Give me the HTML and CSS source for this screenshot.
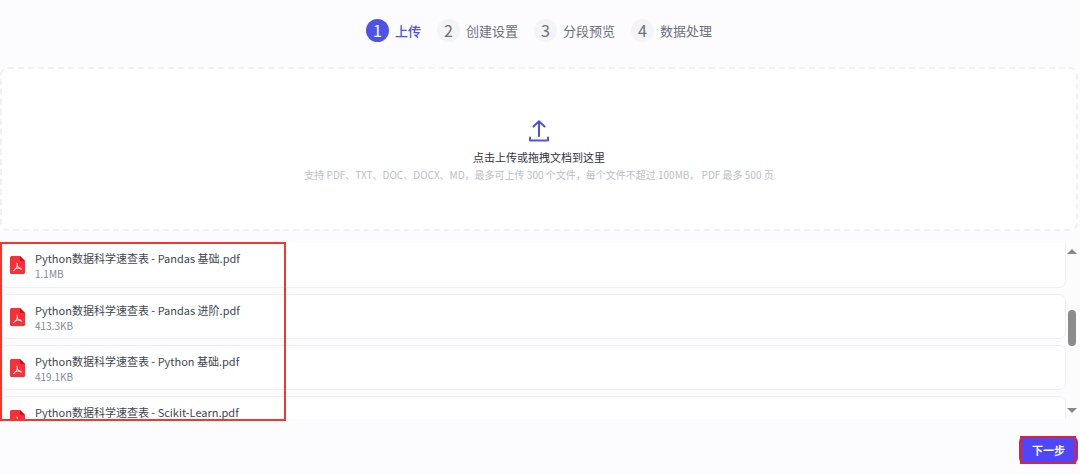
FILE: index.html
```html
<!DOCTYPE html>
<html lang="zh-CN">
<head>
<meta charset="utf-8">
<meta name="viewport" content="width=device-width, initial-scale=1">
<title>上传</title>
<link rel="stylesheet" href="styles.css">
</head>
<body>
    <svg class="defs" width="0" height="0" aria-hidden="true">
        <symbol id="pdf" viewBox="0 0 15 18">
            <path fill="#fb2f38" d="M1.5 0H10l5 5v11.500a1.500 1.500 0 0 1-1.500 1.500h-12A1.500 1.500 0 0 1 0 16.500v-15A1.500 1.500 0 0 1 1.500 0z"/>
            <path fill="#c3121c" d="M10 0l5 5h-4a1 1 0 0 1-1-1z"/>
            <path fill="none" stroke="#fff" stroke-width="1" stroke-linecap="round" stroke-linejoin="round" d="M7 7.200c1.200 2.800-.8 6.300-3.600 7.500M7.300 9.500c.8 2 2.200 3.300 4.200 3.700M4.800 13c1.700-1 3.700-1.300 6-.8"/>
        </symbol>
    </svg>

    <ol class="steps">
        <li class="step active"><span class="num">1</span>上传</li>
        <li class="step"><span class="num">2</span>创建设置</li>
        <li class="step"><span class="num">3</span>分段预览</li>
        <li class="step"><span class="num">4</span>数据处理</li>
    </ol>

    <button type="button" class="dropzone">
        <svg class="upload-icon" width="20" height="22" viewBox="0 0 20 22" aria-hidden="true">
            <path d="M10 16V1.500M4.500 6.500L10 1.200l5.500 5.300M1 17.500V20.500H19V17.500"/>
        </svg>
        <span class="drop-title">点击上传或拖拽文档到这里</span>
        <span class="drop-hint">支持 PDF、TXT、DOC、DOCX、MD，最多可上传 300 个文件，每个文件不超过 100MB， PDF 最多 500 页</span>
    </button>

    <div class="files">
        <ul class="file-list">
            <li class="file">
                <svg class="file-icon"><use href="#pdf"/></svg>
                <div>
                    <div class="file-name">Python数据科学速查表 - Pandas 基础.pdf</div>
                    <div class="file-size">1.1MB</div>
                </div>
            </li>
            <li class="file">
                <svg class="file-icon"><use href="#pdf"/></svg>
                <div>
                    <div class="file-name">Python数据科学速查表 - Pandas 进阶.pdf</div>
                    <div class="file-size">413.3KB</div>
                </div>
            </li>
            <li class="file">
                <svg class="file-icon"><use href="#pdf"/></svg>
                <div>
                    <div class="file-name">Python数据科学速查表 - Python 基础.pdf</div>
                    <div class="file-size">419.1KB</div>
                </div>
            </li>
            <li class="file">
                <svg class="file-icon"><use href="#pdf"/></svg>
                <div>
                    <div class="file-name">Python数据科学速查表 - Scikit-Learn.pdf</div>
                </div>
            </li>
        </ul>
        <div class="scrollbar" aria-hidden="true">
            <span class="arrow up"></span>
            <span class="thumb"></span>
            <span class="arrow down"></span>
        </div>
        <div class="mark"></div>
    </div>

    <div class="footer">
        <button type="button" class="next">下一步</button>
    </div>
</body>
</html>
```

FILE: styles.css
```css
* {
    box-sizing: border-box;
}
body {
    margin: 0;
    padding: 19px 2px 8px 0;
    background: #fcfcff;
    color: #41464f;
    font-family: "Noto Sans CJK SC", sans-serif;
}
ol, ul {
    margin: 0;
    padding: 0;
    list-style: none;
}
.defs {
    position: absolute;
}

/* steps */
.steps {
    display: flex;
    justify-content: center;
    gap: 16px;
}
.step {
    display: flex;
    align-items: center;
    gap: 6px;
    font-size: 13px;
    line-height: 23px;
    color: #6b7080;
}
.num {
    width: 23px;
    height: 23px;
    border-radius: 50%;
    background: #f4f4f7;
    font-size: 16px;
    font-weight: 400;
    text-align: center;
}
.active {
    color: #4d53e8;
    font-weight: 500;
}
.active .num {
    background: #4d53e8;
    color: #fff;
}

/* drop area */
.dropzone {
    display: flex;
    flex-direction: column;
    align-items: center;
    width: 100%;
    margin: 25px 0 12px;
    padding: 51px 16px 45px;
    border: 2px dashed #f1f1f4;
    border-radius: 8px;
    background: #fff;
    font-family: inherit;
    cursor: pointer;
}
.upload-icon {
    fill: none;
    stroke: #4d53e8;
    stroke-width: 2;
    stroke-linecap: round;
    stroke-linejoin: round;
}
.drop-title {
    margin-top: 6px;
    font-size: 11px;
    line-height: 18px;
    color: #30333a;
}
.drop-hint {
    font-size: 10px;
    line-height: 18px;
    color: #bbbec9;
}

/* files */
.files {
    position: relative;
    display: flex;
    height: 176px;
}
.file-list {
    flex: 1;
    display: flex;
    flex-direction: column;
    gap: 6px;
    overflow: hidden;
}
.file {
    display: flex;
    flex-shrink: 0;
    gap: 10px;
    height: 45px;
    padding: 6px 9px;
    border: 1px solid #eeeff5;
    border-radius: 7px;
    background: #fff;
}
.file:first-child {
    border-top: 0;
    border-radius: 0 0 7px 7px;
}
.file-icon {
    width: 15px;
    height: 18px;
    margin-top: 7px;
}
.file-name {
    font-size: 11px;
    line-height: 18px;
}
.file-size {
    font-size: 10px;
    line-height: 14px;
    color: #858a96;
}
.scrollbar {
    display: flex;
    flex-direction: column;
    align-items: center;
    justify-content: space-between;
    width: 12px;
    padding: 6px 0;
}
.arrow {
    border: 5px solid transparent;
}
.up {
    border-top: 0;
    border-bottom-color: #888;
}
.down {
    border-bottom: 0;
    border-top-color: #888;
}
.thumb {
    width: 8px;
    height: 36px;
    margin-bottom: 6px;
    border-radius: 4px;
    background: #8b8b8b;
}
/* red frame round the file names */
.mark {
    position: absolute;
    top: -1px;
    left: 0;
    width: 286px;
    height: 179px;
    border: 2px solid #f5372b;
}

.footer {
    display: flex;
    justify-content: flex-end;
    margin-top: 17px;
}
.next {
    position: relative;
    width: 59px;
    height: 28px;
    padding: 0;
    border: 0;
    border-radius: 6px;
    background: #4e46fb;
    color: #fff;
    font-family: inherit;
    font-size: 11px;
    font-weight: 700;
    line-height: 28px;
    cursor: pointer;
}
.next::after {
    content: "";
    position: absolute;
    inset: 0 2px 0 1px;
    border: 2px solid #e0203c;
}
```
